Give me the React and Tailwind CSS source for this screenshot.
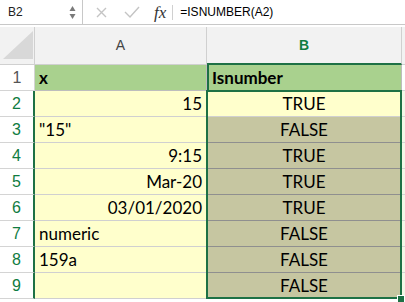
import React from 'react';

const green = '#1e7145';
const yellow = '#ffffcc';
const olive = '#c6c6a1';
const hdrFill = '#a9d18e';

const rows = [
  { n: 2, a: '15', align: 'right', b: 'TRUE' },
  { n: 3, a: '"15"', align: 'left', b: 'FALSE' },
  { n: 4, a: '9:15', align: 'right', b: 'TRUE' },
  { n: 5, a: 'Mar-20', align: 'right', b: 'TRUE' },
  { n: 6, a: '03/01/2020', align: 'right', b: 'TRUE' },
  { n: 7, a: 'numeric', align: 'left', b: 'FALSE' },
  { n: 8, a: '159a', align: 'left', b: 'FALSE' },
  { n: 9, a: '', align: 'left', b: 'FALSE' },
];

function FormulaBar() {
  return (
    <div className="flex h-[25px] items-center border-b border-[#c8c8c8] font-['Liberation_Sans',sans-serif] text-[12px] text-[#222]">
      <div className="flex h-full w-[83px] items-center justify-between border-r border-[#c8c8c8] pl-[8px] pr-[6px]">
        <span>B2</span>
        <svg width="7" height="16" viewBox="0 0 7 16">
          <path d="M3.5 2 L6.5 7 L0.5 7 Z" fill="#7a7a7a" />
          <path d="M0.5 10 L6.5 10 L3.5 15 Z" fill="#7a7a7a" />
        </svg>
      </div>
      <svg className="ml-[13px]" width="11" height="11" viewBox="0 0 11 11">
        <path d="M1 1 L10 10 M10 1 L1 10" stroke="#c4c4c4" strokeWidth="1.4" />
      </svg>
      <svg className="ml-[17px]" width="16" height="12" viewBox="0 0 16 12">
        <path d="M1 6 L6 11 L15 1" stroke="#c4c4c4" strokeWidth="1.4" fill="none" />
      </svg>
      <span className="ml-[14px] font-['Liberation_Serif',serif] text-[17px] italic text-[#333] leading-none">fx</span>
      <div className="ml-[6px] h-[15px] w-px bg-[#d0d0d0]" />
      <span className="ml-[7px] text-black">=ISNUMBER(A2)</span>
    </div>
  );
}

function HeaderRow() {
  return (
    <div className="flex h-[38px] bg-[#f2f2f2] font-['Liberation_Sans',sans-serif] text-[14px]">
      <div className="relative w-[35px] border-r border-b border-[#d0d0d0]">
        <svg className="absolute left-0 top-0" width="35" height="38" viewBox="0 0 35 38">
          <polygon points="3,32 33,4 33,32" fill="#d8d8d8" />
        </svg>
      </div>
      <div className="flex w-[172px] items-center justify-center border-r border-b border-[#d0d0d0] text-[#444]">A</div>
      <div className="flex w-[195px] items-center justify-center border-r border-[#d0d0d0] border-b-2 border-b-[#1e7145] text-[#107c41] font-semibold">B</div>
      <div className="flex-1 border-b border-[#d0d0d0]" />
    </div>
  );
}

export default function App() {
  return (
    <div className="relative h-[302px] w-[405px] overflow-hidden bg-white">
      <FormulaBar />
      <div className="h-[2px]" />
      <HeaderRow />

      <div className="font-['Lato',sans-serif] text-[17px] text-black">
        <div className="flex h-[26px]">
          <div className="flex w-[35px] items-center justify-center border-r border-b border-[#d4d4d4] font-['Liberation_Sans',sans-serif] text-[16px] text-[#555]">1</div>
          <div className="flex w-[172px] items-center border-r border-b border-[#bdbdbd] pl-[4px] font-bold" style={{ background: hdrFill }}>x</div>
          <div className="flex w-[195px] items-center border-l-2 border-l-[#1e7145] border-r border-b border-[#bdbdbd] pl-[3px] font-bold" style={{ background: hdrFill }}>Isnumber</div>
          <div className="flex-1 border-b border-[#d4d4d4]" />
        </div>

        {rows.map((r) => (
          <div key={r.n} className="flex h-[26px]">
            <div className="flex w-[35px] items-center justify-center border-r-2 border-r-[#1e7145] border-b border-b-[#d4d4d4] font-['Liberation_Sans',sans-serif] text-[16px] text-[#107c41]">
              {r.n}
            </div>
            <div
              className={`flex w-[172px] items-center border-r border-b border-[#d0d0d0] px-[4px] ${r.align === 'right' ? 'justify-end' : 'justify-start'}`}
              style={{ background: yellow }}
            >
              {r.a}
            </div>
            <div
              className={`flex w-[195px] items-center justify-center border-r border-b ${r.n === 2 ? 'border-[#d0d0d0]' : 'border-[#8f8f8f]'}`}
              style={{ background: r.n === 2 ? yellow : olive }}
            >
              {r.b}
            </div>
            <div className="flex-1 border-b border-[#d4d4d4]" style={{ background: '#f4f7e6' }} />
          </div>
        ))}
      </div>

      {/* selection outline B2:B9 */}
      <div className="pointer-events-none absolute left-[206px] top-[90px] h-[209px] w-[196px] border-2 border-[#1e7145]" />
      {/* fill handle */}
      <div className="absolute left-[397px] top-[295px] h-[8px] w-[8px] border border-white bg-[#1e7145]" />
    </div>
  );
}
